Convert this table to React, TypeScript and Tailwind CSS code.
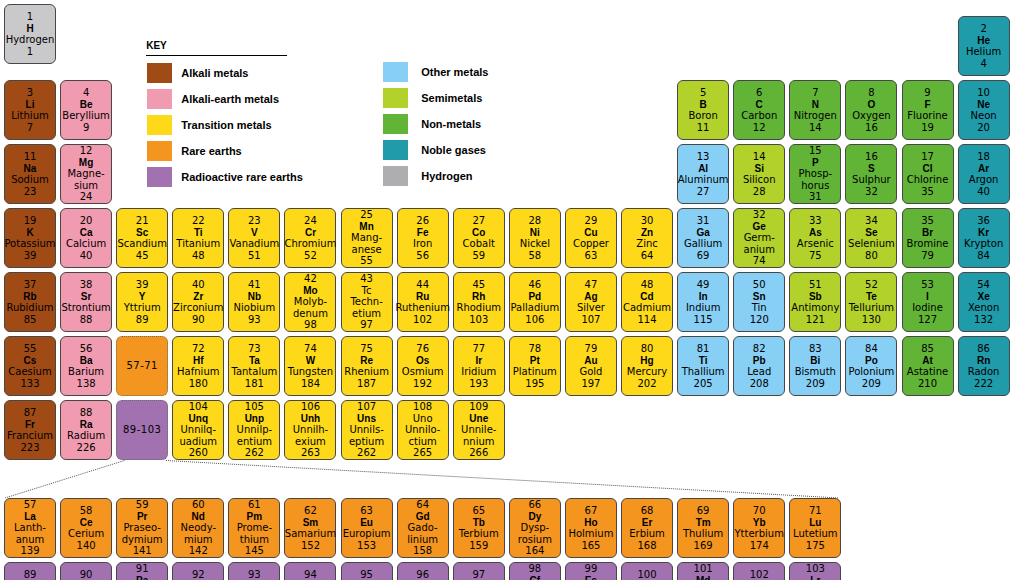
import React from 'react';

// Periodic table with key, lanthanide / actinide rows below

type Cat = 'alk' | 'ear' | 'tra' | 'rar' | 'rad' | 'oth' | 'sem' | 'non' | 'nob' | 'hyd';

const CELL_BG: Record<Cat, string> = {
  alk: 'bg-[#a04b16]',
  ear: 'bg-[#f19bb0]',
  tra: 'bg-[#fdd91a]',
  rar: 'bg-[#f4951f]',
  rad: 'bg-[#a172af]',
  oth: 'bg-[#87cff5]',
  sem: 'bg-[#b2d12b]',
  non: 'bg-[#62b436]',
  nob: 'bg-[#1f9baa]',
  hyd: 'bg-[#c9c9cb]',
};

type El = {
  n: string;
  s: string;
  name: string[];
  m: string;
  c: Cat;
  plain?: boolean;
};

// "num sym name mass" — name lines split by '|'
function el(spec: string, c: Cat, plain = false): El {
  const [n, s, name, m] = spec.split(' ');
  return { n, s, name: name.split('|'), m, c, plain };
}

type Placed = { el: El | 'lan' | 'act'; col: number; row: number };

const MAIN: Placed[] = [
  { el: el('1 H Hydrogen 1', 'hyd'), col: 1, row: 1 },
  { el: el('2 He Helium 4', 'nob'), col: 18, row: 1 },

  { el: el('3 Li Lithium 7', 'alk'), col: 1, row: 2 },
  { el: el('4 Be Beryllium 9', 'ear'), col: 2, row: 2 },
  { el: el('5 B Boron 11', 'sem'), col: 13, row: 2 },
  { el: el('6 C Carbon 12', 'non'), col: 14, row: 2 },
  { el: el('7 N Nitrogen 14', 'non'), col: 15, row: 2 },
  { el: el('8 O Oxygen 16', 'non'), col: 16, row: 2 },
  { el: el('9 F Fluorine 19', 'non'), col: 17, row: 2 },
  { el: el('10 Ne Neon 20', 'nob'), col: 18, row: 2 },

  { el: el('11 Na Sodium 23', 'alk'), col: 1, row: 3 },
  { el: el('12 Mg Magne-|sium 24', 'ear'), col: 2, row: 3 },
  { el: el('13 Al Aluminum 27', 'oth'), col: 13, row: 3 },
  { el: el('14 Si Silicon 28', 'sem'), col: 14, row: 3 },
  { el: el('15 P Phosp-|horus 31', 'non'), col: 15, row: 3 },
  { el: el('16 S Sulphur 32', 'non'), col: 16, row: 3 },
  { el: el('17 Cl Chlorine 35', 'non'), col: 17, row: 3 },
  { el: el('18 Ar Argon 40', 'nob'), col: 18, row: 3 },
];

const ROW4: [string, Cat][] = [
  ['19 K Potassium 39', 'alk'], ['20 Ca Calcium 40', 'ear'], ['21 Sc Scandium 45', 'tra'],
  ['22 Ti Titanium 48', 'tra'], ['23 V Vanadium 51', 'tra'], ['24 Cr Chromium 52', 'tra'],
  ['25 Mn Mang-|anese 55', 'tra'], ['26 Fe Iron 56', 'tra'], ['27 Co Cobalt 59', 'tra'],
  ['28 Ni Nickel 58', 'tra'], ['29 Cu Copper 63', 'tra'], ['30 Zn Zinc 64', 'tra'],
  ['31 Ga Gallium 69', 'oth'], ['32 Ge Germ-|anium 74', 'sem'], ['33 As Arsenic 75', 'sem'],
  ['34 Se Selenium 80', 'sem'], ['35 Br Bromine 79', 'non'], ['36 Kr Krypton 84', 'nob'],
];
const ROW5: [string, Cat][] = [
  ['37 Rb Rubidium 85', 'alk'], ['38 Sr Strontium 88', 'ear'], ['39 Y Yttrium 89', 'tra'],
  ['40 Zr Zirconium 90', 'tra'], ['41 Nb Niobium 93', 'tra'], ['42 Mo Molyb-|denum 98', 'tra'],
  ['43 Tc Techn-|etium 97', 'tra'], ['44 Ru Ruthenium 102', 'tra'], ['45 Rh Rhodium 103', 'tra'],
  ['46 Pd Palladium 106', 'tra'], ['47 Ag Silver 107', 'tra'], ['48 Cd Cadmium 114', 'tra'],
  ['49 In Indium 115', 'oth'], ['50 Sn Tin 120', 'oth'], ['51 Sb Antimony 121', 'sem'],
  ['52 Te Tellurium 130', 'sem'], ['53 I Iodine 127', 'non'], ['54 Xe Xenon 132', 'nob'],
];
const ROW6: ([string, Cat] | 'lan')[] = [
  ['55 Cs Caesium 133', 'alk'], ['56 Ba Barium 138', 'ear'], 'lan',
  ['72 Hf Hafnium 180', 'tra'], ['73 Ta Tantalum 181', 'tra'], ['74 W Tungsten 184', 'tra'],
  ['75 Re Rhenium 187', 'tra'], ['76 Os Osmium 192', 'tra'], ['77 Ir Iridium 193', 'tra'],
  ['78 Pt Platinum 195', 'tra'], ['79 Au Gold 197', 'tra'], ['80 Hg Mercury 202', 'tra'],
  ['81 Ti Thallium 205', 'oth'], ['82 Pb Lead 208', 'oth'], ['83 Bi Bismuth 209', 'oth'],
  ['84 Po Polonium 209', 'oth'], ['85 At Astatine 210', 'non'], ['86 Rn Radon 222', 'nob'],
];
const ROW7: ([string, Cat] | 'act')[] = [
  ['87 Fr Francium 223', 'alk'], ['88 Ra Radium 226', 'ear'], 'act',
  ['104 Unq Unnilq-|uadium 260', 'tra'], ['105 Unp Unnilp-|entium 262', 'tra'],
  ['106 Unh Unnilh-|exium 263', 'tra'], ['107 Uns Unnils-|eptium 262', 'tra'],
  ['108 Uno Unnilo-|ctium 265', 'tra'], ['109 Une Unnile-|nnium 266', 'tra'],
];

const PLAIN = new Set(['Tc', 'Uno']);

[ROW4, ROW5, ROW6, ROW7].forEach((row, i) => {
  row.forEach((item, col) => {
    if (item === 'lan' || item === 'act') {
      MAIN.push({ el: item, col: col + 1, row: i + 4 });
    } else {
      const e = el(item[0], item[1]);
      e.plain = PLAIN.has(e.s);
      MAIN.push({ el: e, col: col + 1, row: i + 4 });
    }
  });
});

const LANTH: El[] = [
  '57 La Lanth-|anum 139', '58 Ce Cerium 140', '59 Pr Praseo-|dymium 141', '60 Nd Neody-|mium 142',
  '61 Pm Prome-|thium 145', '62 Sm Samarium 152', '63 Eu Europium 153', '64 Gd Gado-|linium 158',
  '65 Tb Terbium 159', '66 Dy Dysp-|rosium 164', '67 Ho Holmium 165', '68 Er Erbium 168',
  '69 Tm Thulium 169', '70 Yb Ytterbium 174', '71 Lu Lutetium 175',
].map((s) => el(s, 'rar'));

const ACTIN: El[] = [
  '89 Ac Actinium 227', '90 Th Thorium 232', '91 Pa Protac-|tinium 231', '92 U Uranium 238',
  '93 Np Neptunium 237', '94 Pu Plutonium 244', '95 Am Americium 243', '96 Cm Curium 247',
  '97 Bk Berkelium 247', '98 Cf Califo-|rnium 251', '99 Es Einste-|inium 252', '100 Fm Fermium 257',
  '101 Md Mendel-|evium 258', '102 No Nobelium 259', '103 Lr Lawre-|ncium 260',
].map((s) => el(s, 'rad'));

const KEY_LEFT: [string, string][] = [
  ['bg-[#a04b16]', 'Alkali metals'],
  ['bg-[#f19bb0]', 'Alkali-earth metals'],
  ['bg-[#fdd91a]', 'Transition metals'],
  ['bg-[#f4951f]', 'Rare earths'],
  ['bg-[#a172af]', 'Radioactive rare earths'],
];
const KEY_RIGHT: [string, string][] = [
  ['bg-[#87cff5]', 'Other metals'],
  ['bg-[#b2d12b]', 'Semimetals'],
  ['bg-[#62b436]', 'Non-metals'],
  ['bg-[#1f9baa]', 'Noble gases'],
  ['bg-[#aeaeb0]', 'Hydrogen'],
];

const cellBase =
  'w-[52px] h-[60px] rounded-[6px] flex flex-col items-center justify-center text-[10px] leading-[11.5px] text-black whitespace-nowrap font-["DejaVu_Sans",sans-serif]';

function Cell({ e, className = '' }: { e: El; className?: string }) {
  return (
    <div className={`${cellBase} border border-[#474747] ${CELL_BG[e.c]} ${className}`}>
      <span>{e.n}</span>
      <span className={e.plain ? '' : 'font-bold font-["Liberation_Sans",sans-serif]'}>{e.s}</span>
      {e.name.map((line) => (
        <span key={line}>{line}</span>
      ))}
      <span>{e.m}</span>
    </div>
  );
}

function RangeCell({ label, bg }: { label: string; bg: string }) {
  return (
    <div className={`${cellBase} border border-dotted border-[#6a6a6a] ${bg}`}>
      <span className="tracking-[0.5px]">{label}</span>
    </div>
  );
}

function KeyColumn({ items, gap }: { items: [string, string][]; gap: string }) {
  return (
    <div className="flex flex-col gap-[6px]">
      {items.map(([bg, label]) => (
        <div key={label} className="flex items-center h-[20px]">
          <div className={`w-[25px] h-[20px] ${bg}`} />
          <span className={`${gap} text-[11px] font-bold text-black font-["Liberation_Sans",sans-serif]`}>
            {label}
          </span>
        </div>
      ))}
    </div>
  );
}

export default function App() {
  return (
    <div className="relative w-[1013px] h-[580px] overflow-hidden bg-white pl-[4px] pt-[4px]">
      <div className="grid grid-cols-[repeat(18,52px)] grid-rows-[72px_repeat(6,60px)] gap-x-[4.1px] gap-y-[4px]">
        {MAIN.map((p, i) => (
          <div
            key={i}
            className={p.row === 1 ? (p.col === 1 ? 'self-start' : 'self-end') : ''}
            style={{ gridColumnStart: p.col, gridRowStart: p.row }}
          >
            {p.el === 'lan' ? (
              <RangeCell label="57-71" bg="bg-[#f4951f]" />
            ) : p.el === 'act' ? (
              <RangeCell label="89-103" bg="bg-[#a172af]" />
            ) : (
              <Cell e={p.el} />
            )}
          </div>
        ))}

        {/* Key */}
        <div className="col-start-3 col-span-10 row-start-1 row-span-3 pl-[30px] pt-[36px]">
          <div className="w-[141px] h-[16px] border-b border-black text-[10px] leading-[12px] font-bold text-black font-['Liberation_Sans',sans-serif]">
            KEY
          </div>
          <div className="flex mt-[7px] pl-[1px]">
            <div className="w-[236px]">
              <KeyColumn items={KEY_LEFT} gap="ml-[9px]" />
            </div>
            <div className="-mt-[1px]">
              <KeyColumn items={KEY_RIGHT} gap="ml-[13px]" />
            </div>
          </div>
        </div>
      </div>

      {/* Rare earth rows */}
      <div className="mt-[38px] grid grid-cols-[repeat(15,52px)] gap-x-[4.1px] gap-y-[4px]">
        {LANTH.map((e) => (
          <Cell key={e.n} e={e} />
        ))}
        {ACTIN.map((e) => (
          <Cell key={e.n} e={e} />
        ))}
      </div>

      {/* dotted guide lines from 89-103 to the rare earth rows */}
      <svg className="absolute left-0 top-0 pointer-events-none" width="1013" height="580">
        <line x1="124.5" y1="460.5" x2="5" y2="498" stroke="#555" strokeWidth="1" strokeDasharray="1 1" />
        <line x1="166" y1="460.5" x2="839" y2="498" stroke="#555" strokeWidth="1" strokeDasharray="1 1" />
      </svg>
    </div>
  );
}
